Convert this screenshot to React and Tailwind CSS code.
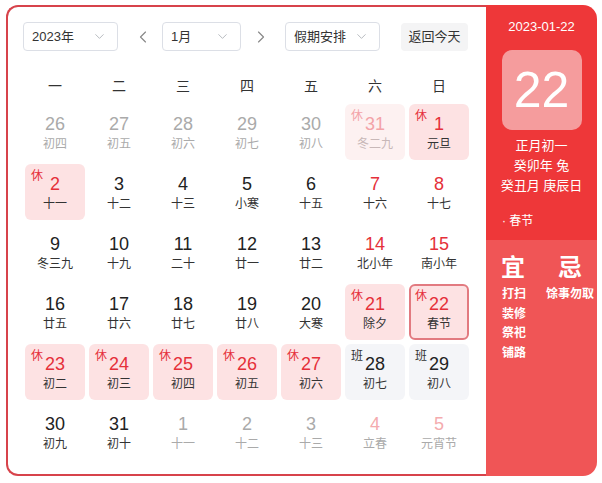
import React from 'react';
import { ChevronDown, ChevronLeft, ChevronRight } from 'lucide-react';

const FONT = { fontFamily: '"Liberation Sans", "Noto Sans CJK SC", sans-serif' };

// kind: prev | next | normal | weekend ; tag: 休 / 班
const rows = [
  [
    { d: 26, l: '初四', kind: 'prev' },
    { d: 27, l: '初五', kind: 'prev' },
    { d: 28, l: '初六', kind: 'prev' },
    { d: 29, l: '初七', kind: 'prev' },
    { d: 30, l: '初八', kind: 'prev' },
    { d: 31, l: '冬二九', kind: 'prev', tag: '休' },
    { d: 1, l: '元旦', tag: '休' },
  ],
  [
    { d: 2, l: '十一', tag: '休' },
    { d: 3, l: '十二' },
    { d: 4, l: '十三' },
    { d: 5, l: '小寒' },
    { d: 6, l: '十五' },
    { d: 7, l: '十六', kind: 'weekend' },
    { d: 8, l: '十七', kind: 'weekend' },
  ],
  [
    { d: 9, l: '冬三九' },
    { d: 10, l: '十九' },
    { d: 11, l: '二十' },
    { d: 12, l: '廿一' },
    { d: 13, l: '廿二' },
    { d: 14, l: '北小年', kind: 'weekend' },
    { d: 15, l: '南小年', kind: 'weekend' },
  ],
  [
    { d: 16, l: '廿五' },
    { d: 17, l: '廿六' },
    { d: 18, l: '廿七' },
    { d: 19, l: '廿八' },
    { d: 20, l: '大寒' },
    { d: 21, l: '除夕', tag: '休' },
    { d: 22, l: '春节', tag: '休', selected: true },
  ],
  [
    { d: 23, l: '初二', tag: '休' },
    { d: 24, l: '初三', tag: '休' },
    { d: 25, l: '初四', tag: '休' },
    { d: 26, l: '初五', tag: '休' },
    { d: 27, l: '初六', tag: '休' },
    { d: 28, l: '初七', tag: '班' },
    { d: 29, l: '初八', tag: '班' },
  ],
  [
    { d: 30, l: '初九' },
    { d: 31, l: '初十' },
    { d: 1, l: '十一', kind: 'next' },
    { d: 2, l: '十二', kind: 'next' },
    { d: 3, l: '十三', kind: 'next' },
    { d: 4, l: '立春', kind: 'nextWeekend' },
    { d: 5, l: '元宵节', kind: 'nextWeekend' },
  ],
];

const Select = ({ label, width }) => (
  <div
    className={`flex items-center justify-between h-[29px] border border-[#dcdfe6] rounded-[4px] pl-[8px] pr-[10px] text-[13px] text-[#333] bg-white ${width}`}
  >
    <span>{label}</span>
    <ChevronDown size={15} strokeWidth={1.3} className="text-[#a8abb2]" />
  </div>
);

const Cell = ({ c }) => {
  const faded = c.kind === 'prev' || c.kind === 'next';
  let bg = '';
  if (c.tag === '休') bg = faded ? 'bg-[#fdf1f1]' : 'bg-[#fde2e3]';
  if (c.tag === '班') bg = 'bg-[#f4f5f8]';
  const border = c.selected ? 'border-2 border-[#e27a80]' : '';

  let num = 'text-[#222]';
  if (c.tag === '休') num = faded ? 'text-[#f3a3a8]' : 'text-[#e5303a]';
  else if (c.kind === 'weekend') num = 'text-[#e5303a]';
  else if (faded) num = 'text-[#aaaaaa]';
  else if (c.kind === 'nextWeekend') num = 'text-[#f4abae]';

  let lunar = 'text-[#333]';
  if (faded || c.kind === 'nextWeekend') lunar = 'text-[#aaaaaa]';
  if (faded && c.tag === '休') lunar = 'text-[#c8b8b8]';

  const tagColor = c.tag === '班' ? 'text-[#333]' : faded ? 'text-[#f3a3a8]' : 'text-[#e5303a]';

  return (
    <div className={`relative h-[56px] rounded-[6px] flex flex-col items-center justify-center pt-[3px] ${bg} ${border}`}>
      {c.tag && (
        <span className={`absolute ${c.selected ? 'top-[4px] left-[4px]' : 'top-[6px] left-[6px]'} text-[12px] leading-[12px] ${tagColor}`}>
          {c.tag}
        </span>
      )}
      <span className={`text-[18px] leading-[21px] ${num}`}>{c.d}</span>
      <span className={`mt-[1px] text-[12px] leading-[17px] ${lunar}`}>{c.l}</span>
    </div>
  );
};

const App = () => {
  return (
    <div className="w-[602px] h-[483px] bg-white pt-[5px] pl-[6px]" style={FONT}>
      <div className="flex w-[591px] h-[471px]">
        {/* Calendar */}
        <div className="w-[480px] h-full border-2 border-r-0 border-[#d7434b] rounded-l-[12px] pt-[15px] pl-[15px] pr-[10px]">
          <div className="flex items-center">
            <Select label="2023年" width="w-[95px]" />
            <ChevronLeft size={20} strokeWidth={1.4} className="text-[#888] ml-[15px]" />
            <div className="ml-[9px]">
              <Select label="1月" width="w-[79px]" />
            </div>
            <ChevronRight size={20} strokeWidth={1.4} className="text-[#888] ml-[10px]" />
            <div className="ml-[14px]">
              <Select label="假期安排" width="w-[95px]" />
            </div>
            <div className="ml-[21px] h-[28px] w-[67px] rounded-[4px] bg-[#f4f4f5] flex items-center justify-center text-[13px] text-[#333]">
              返回今天
            </div>
          </div>

          <div className="ml-[2px] w-[444px] grid grid-cols-7 gap-x-[4px] mt-[15px] h-[38px] items-center pt-[2px] text-[14px] text-[#333]">
            {['一', '二', '三', '四', '五', '六', '日'].map((w) => (
              <div key={w} className="text-center">{w}</div>
            ))}
          </div>

          <div className="ml-[2px] w-[444px] grid grid-cols-7 gap-[4px]">
            {rows.flat().map((c, i) => (
              <Cell key={i} c={c} />
            ))}
          </div>
        </div>

        {/* Side panel */}
        <div className="w-[111px] h-full rounded-r-[14px] overflow-hidden flex flex-col text-white">
          <div className="h-[235px] bg-[#ee3739] flex flex-col items-center pt-[13px]">
            <div className="text-[13px] leading-[18px]">2023-01-22</div>
            <div className="mt-[14px] w-[80px] h-[80px] rounded-[10px] bg-[#f59c9d] flex items-center justify-center text-[50px] leading-none">
              22
            </div>
            <div className="mt-[6px] text-[13px] leading-[20px]">正月初一</div>
            <div className="text-[13px] leading-[20px]">癸卯年 兔</div>
            <div className="text-[13px] leading-[20px]">癸丑月 庚辰日</div>
            <div className="self-start ml-[16px] mt-[16px] text-[12px] leading-[18px]">· 春节</div>
          </div>
          <div className="flex-1 bg-[#f05556] flex pt-[13px] pl-[16px]">
            <div className="flex flex-col w-[44px]">
              <div className="text-[24px] leading-[30px] font-bold self-start ml-[-1px]">宜</div>
              <div className="mt-[2px] text-[12px] leading-[19.5px] font-bold">
                <div>打扫</div>
                <div>装修</div>
                <div>祭祀</div>
                <div>铺路</div>
              </div>
            </div>
            <div className="flex flex-col items-center">
              <div className="text-[24px] leading-[30px] font-bold">忌</div>
              <div className="mt-[2px] text-[12px] leading-[19.5px] font-bold">馀事勿取</div>
            </div>
          </div>
        </div>
      </div>
    </div>
  );
};

export default App;
